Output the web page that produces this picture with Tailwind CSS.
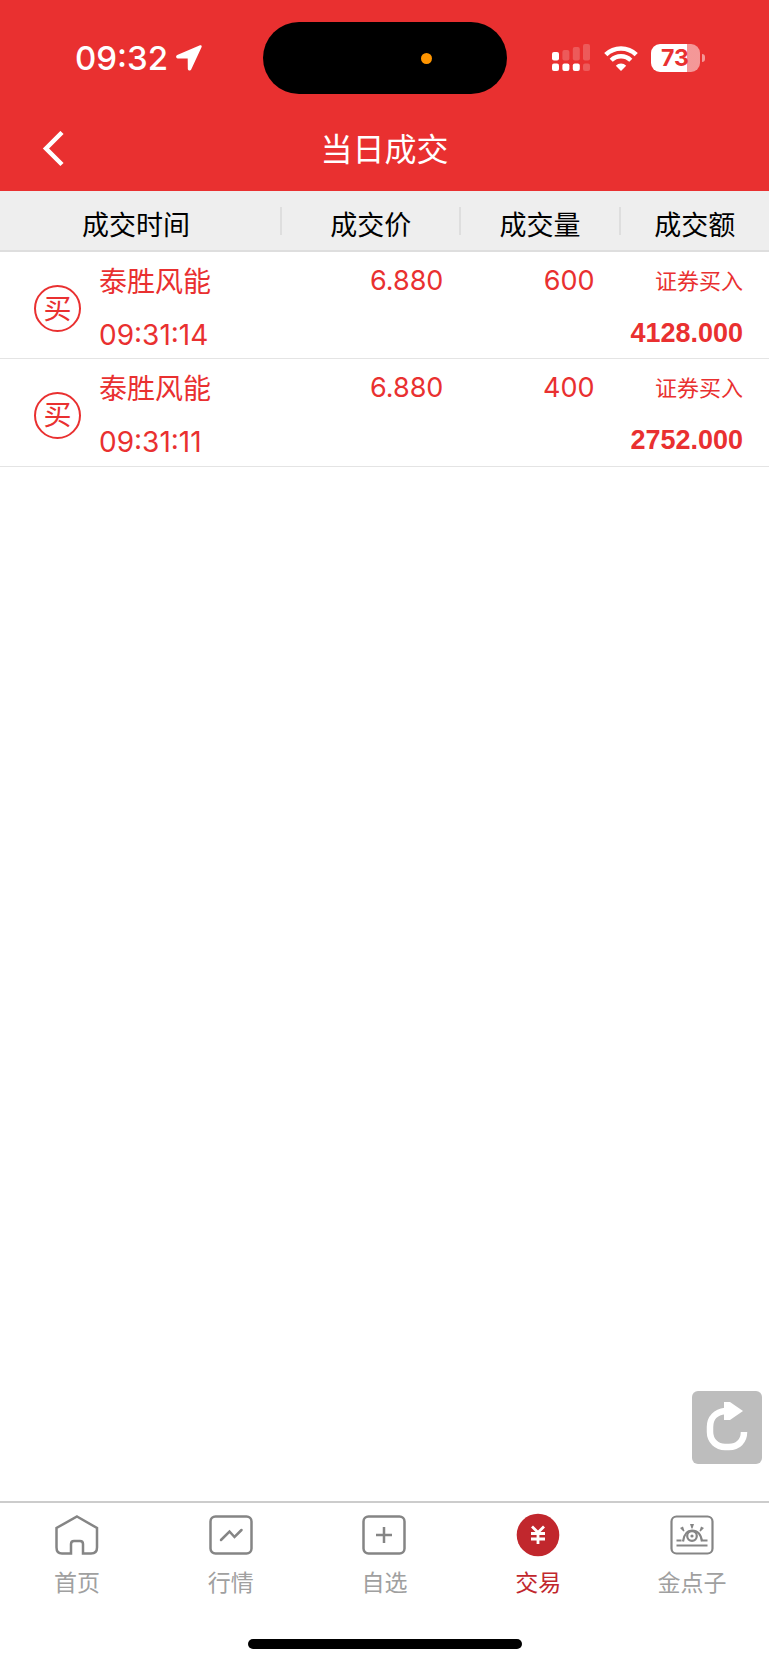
<!DOCTYPE html>
<html lang="zh-CN">
<head>
    <meta charset="UTF-8">
    <meta name="viewport" content="width=device-width, initial-scale=1.0">
    <title>当日成交</title>
    <script src="https://cdn.jsdelivr.net/npm/@tailwindcss/browser@4"></script>
</head>
<body class="bg-white font-['Inter','Noto_Sans_CJK_SC',sans-serif]">
    <div class="relative flex min-h-screen flex-col">
        <!-- Header -->
        <header class="bg-[#e93030] text-white">
            <!-- Status bar -->
            <div class="grid h-[116px] grid-cols-[1fr_244px_1fr] items-center">
                <div class="flex items-center gap-2 pl-[75px]">
                    <span class="text-[33px] leading-10 font-medium">09:32</span>
                    <svg class="h-[26px] w-[26px]" viewBox="0 0 26 26" fill="currentColor">
                        <path d="M24 .3 1.2 10.1C-.5 10.900-.2 13.400 1.700 13.400L11.700 13.500 11.800 23.700C11.800 25.800 14.400 26.200 15.200 24.400L25.500 2.200C26.100.9 25.200-.2 24 .3Z"/>
                    </svg>
                </div>
                <div class="flex h-[72px] items-center justify-end rounded-full bg-black pr-[75px]">
                    <span class="h-[11px] w-[11px] rounded-full bg-[#ff9500]"></span>
                </div>
                <div class="flex items-center pl-[45px]">
                    <svg class="h-[28px] w-[38px]" viewBox="0 0 38 28" fill="currentColor">
                        <rect x="0" y="8" width="7" height="8.500" rx="2"/>
                        <rect x="0" y="19.500" width="7" height="7.500" rx="2"/>
                        <rect x="10.400" y="19.500" width="7" height="7.500" rx="2"/>
                        <rect x="20.800" y="19.500" width="7" height="7.500" rx="2"/>
                        <g opacity=".2">
                            <rect x="10.400" y="6" width="7" height="10.500" rx="2"/>
                            <rect x="20.800" y="3" width="7" height="13.500" rx="2"/>
                            <rect x="31" y="0" width="7" height="16.500" rx="2"/>
                            <rect x="31" y="19.500" width="7" height="7.500" rx="2"/>
                        </g>
                    </svg>
                    <svg class="ml-[14px] h-[25px] w-[34px]" viewBox="0 0 34 25" fill="none" stroke="currentColor">
                        <path d="M1.800 8.600a21.800 21.800 0 0 1 30.400 0" stroke-width="4.600"/>
                        <path d="M7.200 14.200a14 14 0 0 1 19.600 0" stroke-width="4.400"/>
                        <path d="M17 25 11.800 19.700a7.400 7.400 0 0 1 10.400 0Z" fill="currentColor" stroke="none"/>
                    </svg>
                    <div class="ml-[13px] flex h-7 w-[49px] items-center justify-center rounded-[9px] bg-linear-to-r from-white from-73% to-white/50 to-73% text-[23px] leading-none font-bold text-[#e93030]">73</div>
                    <span class="ml-[2px] h-2 w-[3px] rounded-r-full bg-white/50"></span>
                </div>
            </div>
            <!-- Title bar -->
            <div class="grid h-[75px] grid-cols-[1fr_auto_1fr] items-center pb-[10px]">
                <button type="button" aria-label="返回" class="ml-[42px] w-[22px]">
                    <svg class="h-9 w-[22px]" viewBox="0 0 22 36" fill="none" stroke="currentColor" stroke-width="4.500">
                        <path d="M20 1.500 4 17.500 20 33.500"/>
                    </svg>
                </button>
                <h1 class="pt-[2px] text-[32px] leading-10 font-normal">当日成交</h1>
            </div>
        </header>

        <!-- Trade list -->
        <main class="flex-1">
            <table class="w-full table-fixed border-collapse text-[#e93030]">
                <thead class="bg-[#eeeeee] text-[27px] leading-10 text-black">
                    <tr class="h-[60px] border-b-2 border-[#dedede]">
                        <th class="w-[36.700%] p-0 font-normal">
                            <div class="flex h-7 items-center border-r-2 border-[#dedede] pr-[8px]"><span class="flex-1 pt-[10px]">成交时间</span></div>
                        </th>
                        <th class="w-[23.300%] p-0 font-normal">
                            <div class="flex h-7 items-center border-r-2 border-[#dedede]"><span class="flex-1 pt-[10px]">成交价</span></div>
                        </th>
                        <th class="w-[20.700%] p-0 font-normal">
                            <div class="flex h-7 items-center border-r-2 border-[#dedede]"><span class="flex-1 pt-[10px]">成交量</span></div>
                        </th>
                        <th class="p-0 font-normal">
                            <div class="flex h-7 items-center"><span class="flex-1 pt-[10px]">成交额</span></div>
                        </th>
                    </tr>
                </thead>
                <tbody class="text-[27px] leading-10">
                    <tr class="h-[107px] border-b border-[#e4e4e4] align-top">
                        <td class="p-0">
                            <div class="flex items-center pt-[10px] pl-[34px]">
                                <span class="flex h-[47px] w-[47px] items-center justify-center rounded-full border-2 text-[28px]">买</span>
                                <div class="pl-[18px] text-[28px]">
                                    <div>泰胜风能</div>
                                    <div class="mt-[13px]">09:31:14</div>
                                </div>
                            </div>
                        </td>
                        <td class="pt-[9px] pr-[18px] text-right">6.880</td>
                        <td class="pt-[9px] pr-[26px] text-right">600</td>
                        <td class="pt-[9px] pr-[26px] text-right">
                            <div class="text-[22px]">证券买入</div>
                            <div class="mt-3 font-['Liberation_Sans',sans-serif] font-bold">4128.000</div>
                        </td>
                    </tr>
                    <tr class="h-[108px] border-b border-[#e4e4e4] align-top">
                        <td class="p-0">
                            <div class="flex items-center pt-[10px] pl-[34px]">
                                <span class="flex h-[47px] w-[47px] items-center justify-center rounded-full border-2 text-[28px]">买</span>
                                <div class="pl-[18px] text-[28px]">
                                    <div>泰胜风能</div>
                                    <div class="mt-[13px]">09:31:11</div>
                                </div>
                            </div>
                        </td>
                        <td class="pt-[9px] pr-[18px] text-right">6.880</td>
                        <td class="pt-[9px] pr-[26px] text-right">400</td>
                        <td class="pt-[9px] pr-[26px] text-right">
                            <div class="text-[22px]">证券买入</div>
                            <div class="mt-3 font-['Liberation_Sans',sans-serif] font-bold">2752.000</div>
                        </td>
                    </tr>
                </tbody>
            </table>
        </main>

        <!-- Refresh -->
        <button type="button" aria-label="刷新" class="absolute right-[7px] bottom-[201px] h-[73px] w-[70px] rounded-md bg-[#bdbdbd] text-white">
            <svg class="h-[73px] w-[70px]" viewBox="0 0 70 73" fill="none">
                <path d="M33 20C24 21 18 27 18 36v5c0 9 7 15 15 15h4c9 0 15-6 15-15" stroke="currentColor" stroke-width="6.500"/>
                <path d="M32 11h6l13 9-13 9h-6Z" fill="currentColor"/>
            </svg>
        </button>

        <!-- Tab bar -->
        <footer class="border-t-2 border-[#cccccc] pb-4">
            <nav class="grid h-[136px] grid-cols-5 text-[23px] leading-8 text-[#a0a0a0]">
                <a href="#" class="flex flex-col items-center gap-[10px] pt-[10px]">
                    <svg class="h-11 w-11" viewBox="0 0 44 44" fill="none" stroke="#858585" stroke-width="2.500">
                        <path d="M22 3.500 42 15V34.500Q42 40.500 36 40.500H28V31Q28 28 25 28H19Q16 28 16 31V40.500H7Q1.500 40.500 1.500 34.500V15Z"/>
                    </svg>
                    <span>首页</span>
                </a>
                <a href="#" class="flex flex-col items-center gap-[10px] pt-[10px]">
                    <svg class="h-11 w-11" viewBox="0 0 44 44" fill="none" stroke="#858585" stroke-width="2.500">
                        <rect x="1.500" y="3.500" width="41" height="37" rx="5"/>
                        <path d="m12 27 8.500-8.500 5 5.500 7-7" stroke-linecap="round"/>
                    </svg>
                    <span>行情</span>
                </a>
                <a href="#" class="flex flex-col items-center gap-[10px] pt-[10px]">
                    <svg class="h-11 w-11" viewBox="0 0 44 44" fill="none" stroke="#858585" stroke-width="2.500">
                        <rect x="1.500" y="3.500" width="41" height="37" rx="5"/>
                        <path d="M22 14v16M14 22h16"/>
                    </svg>
                    <span>自选</span>
                </a>
                <a href="#" aria-current="page" class="flex flex-col items-center gap-[10px] pt-[10px] text-[#c1272d]">
                    <svg class="h-11 w-11" viewBox="0 0 44 44" fill="none" stroke="#ffffff" stroke-width="2.800">
                        <circle cx="22" cy="22" r="21.300" fill="#c1272d" stroke="none"/>
                        <path d="m16 13.500 6 6 6-6M22 19v12M15 20.500h14M15 26h14"/>
                    </svg>
                    <span>交易</span>
                </a>
                <a href="#" class="flex flex-col items-center gap-[10px] pt-[10px]">
                    <svg class="h-11 w-11" viewBox="0 0 44 44" fill="none" stroke="#858585" stroke-width="2.200">
                        <rect x="1.500" y="3.500" width="41" height="37" rx="5"/>
                        <path d="M6.500 32.500h31M6.500 27.500h5M32.500 27.500h5M13 28.500C14 21 17 17.500 22 17.500S31 21 32 28.500"/>
                        <circle cx="22" cy="23" r="4.800"/>
                        <circle cx="22" cy="23" r="1.600" fill="#858585" stroke="none"/>
                        <path d="M20 11h4l-1.500 4.500h-1ZM10 15l3-1.500 1.500 4.500-1 .5ZM34 15l-3-1.500-1.500 4.500 1 .5Z" fill="#858585" stroke="none"/>
                    </svg>
                    <span>金点子</span>
                </a>
            </nav>
            <div class="mx-auto h-[10px] w-[274px] rounded-full bg-black"></div>
        </footer>
    </div>
</body>
</html>
